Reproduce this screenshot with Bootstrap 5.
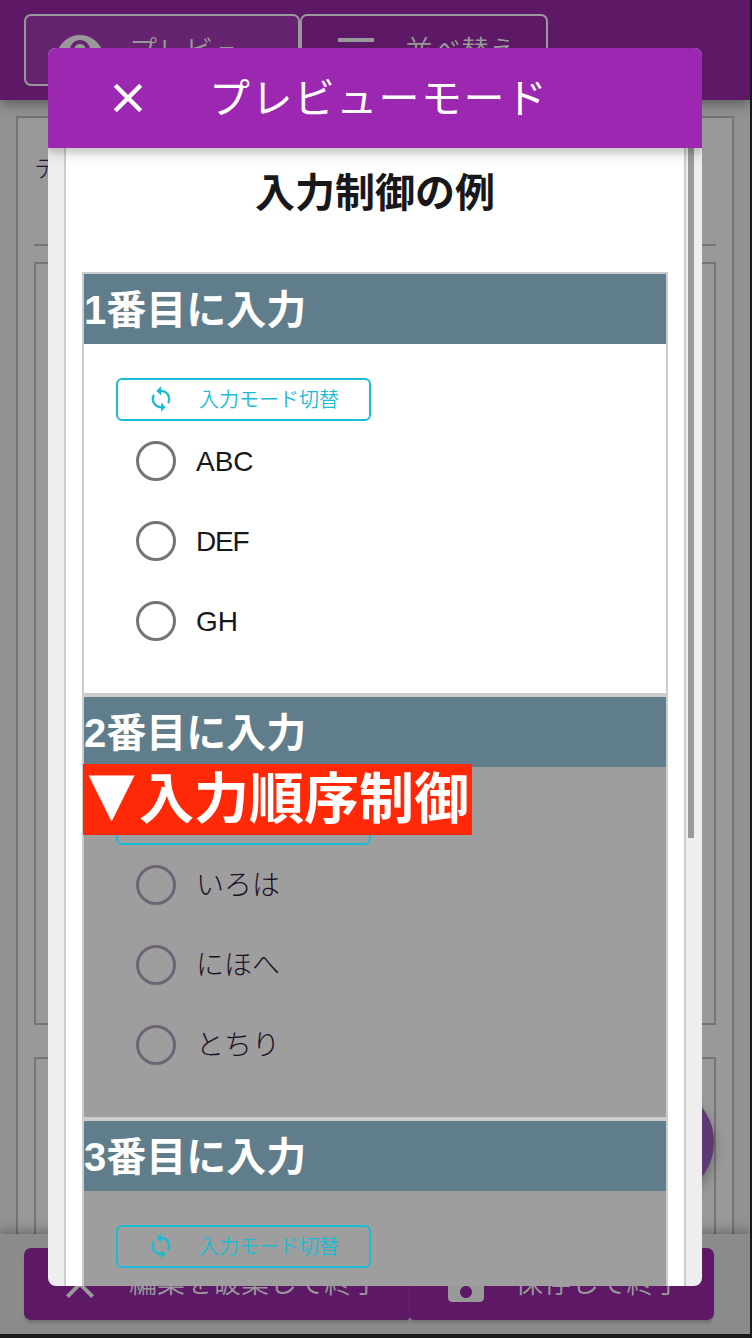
<!DOCTYPE html>
<html lang="ja">
<head>
<meta charset="utf-8">
<meta name="viewport" content="width=device-width, initial-scale=1">
<title>プレビューモード</title>
<link href="https://cdn.jsdelivr.net/npm/bootstrap@5.3.0/dist/css/bootstrap.min.css" rel="stylesheet">
<style>
*{box-sizing:border-box}
body{margin:0;width:752px;height:1338px;overflow:hidden;background:#1a1a1c;color:#18181b;font-family:"Liberation Sans","Noto Sans CJK JP",sans-serif;font-size:28px;line-height:1;font-weight:350}
svg{display:block;flex:none;fill:currentColor}
.screen{width:750px;height:1334px;background:#929292}
.topbar{height:100px;padding:14px 24px;background:#5d1866;color:#999;box-shadow:0 4px 8px -2px rgba(0,0,0,.2),0 8px 10px rgba(0,0,0,.12),0 2px 18px rgba(0,0,0,.1);z-index:1}
.tab-btn{height:72px;border:2px solid #999;border-radius:7px;padding-left:30px;white-space:nowrap}
.tab-btn span{padding-top:3px}
.tab-btn.on{width:276px;background:#652370}
.tab-btn.sort{width:248px}
.icon-gap{gap:25px}
.sheet{margin:16px 16px 0;border:2px solid #757575;border-bottom:0;background:#999;padding:0 16px}
.field{height:128px;border-bottom:2px solid #757575;padding:39px 0 0 0;font-size:24px;font-weight:300;color:#2a0f33}
.block{border:2px solid #757575;height:763px;margin-top:16px}
.block.next{margin-top:32px;height:177px;border-bottom:0}
.bottombar{height:100px;background:#8b8b8b;padding:14px 36px 14px 24px;box-shadow:0 -3px 8px rgba(0,0,0,.2),0 -8px 14px rgba(0,0,0,.08);color:#999;z-index:1}
.act{height:72px;background:#5d1866;border-radius:4px 4px 4px 7px;box-shadow:0 4px 3px -1px #737373;padding-left:32px;white-space:nowrap}
.act.quit{width:386px;border-radius:7px 0 4px 7px}
.act.keep{width:304px;border-radius:0 7px 7px 4px}
.fab{right:36px;top:1086px;width:112px;height:112px;border-radius:50%;background:#5e3973;box-shadow:0 6px 12px rgba(0,0,0,.3)}
.dialog-layer{z-index:5;padding:48px}
.sheet-modal{width:654px;height:1238px;border-radius:8px;background:#eee}
.modal-bar{height:100px;background:#9c27b0;color:#fff;padding-left:56px;font-size:41px;letter-spacing:1.4px;font-weight:400;z-index:2;box-shadow:0 5px 5px rgba(0,0,0,.13),0 10px 10px rgba(0,0,0,.08)}
.modal-bar svg{stroke:currentColor;stroke-width:.25}
.modal-bar .ttl{margin-left:57px;padding-top:2px}
.modal-main{height:1138px}
.form-sheet{width:622px;margin-left:16px;border:2px solid #ccc;border-width:0 2px;background:#fff;padding:0 16px}
.thumb{width:6px;height:690px;background:#999;margin-left:2px}
.form-ttl{height:124px;padding-top:25px;font-size:40px;font-weight:700}
.sec{border:2px solid #ccc;color:#18181b}
.sec .hd{height:70px;background:#607d8b;color:#fff;font-size:40px;font-weight:700;padding-top:2px}
.sec .bd{height:350px;padding:34px 32px 0}
.sec:first-of-type .bd{height:349px}
.sec.off .bd{background:#9e9e9e}
.sec.locked .bd{padding-top:35px}
.sec.off .pick{color:#201027;font-weight:300}
.toggle{width:255px;height:43px;border:2px solid #1abcd4;border-radius:6px;color:#1abcd4;font-size:20px;padding-left:30px;gap:24px}
.toggle svg{margin:-1px 0 0 -1px}
.pick{height:80px;padding-left:20px;gap:20px}
.pick span{padding-top:1px}
.sec.off .pick span{padding-top:2px}
.pick .tight{letter-spacing:-1.2px}
.pick .form-check-input{width:40px;height:40px;border:3px solid #757575;background:transparent;margin:0;float:none}
.sec.off .form-check-input{border-color:#6e6574}
.flag{left:-1px;top:67px;width:389px;height:71px;background:#ff2807;color:#fff;font-size:55px;font-weight:700;z-index:1;padding-left:1px}
.flag .tri{width:55px;font-family:"DejaVu Sans";font-size:60px;font-weight:400;margin-top:-14px}
</style>
<script src="https://cdn.jsdelivr.net/npm/bootstrap@5.3.0/dist/js/bootstrap.bundle.min.js"></script>
</head>
<body>
<svg width="0" height="0" class="position-absolute">
<symbol id="i-close" viewBox="0 0 24 24"><path d="M19 6.41 17.59 5 12 10.59 6.41 5 5 6.41 10.59 12 5 17.59 6.41 19 12 13.41 17.59 19 19 17.59 13.41 12z"/></symbol>
<symbol id="i-eye" viewBox="0 0 24 24"><path d="M12 4.5C7 4.5 2.73 7.61 1 12c1.73 4.39 6 7.5 11 7.5s9.27-3.11 11-7.5c-1.73-4.39-6-7.5-11-7.5zM12 17c-2.76 0-5-2.24-5-5s2.24-5 5-5 5 2.24 5 5-2.24 5-5 5zm0-8c-1.66 0-3 1.34-3 3s1.34 3 3 3 3-1.34 3-3-1.34-3-3-3z"/></symbol>
<symbol id="i-menu" viewBox="0 0 24 24"><path d="M3 18h18v-2H3v2zm0-5h18v-2H3v2zm0-7v2h18V6H3z"/></symbol>
<symbol id="i-save" viewBox="0 0 24 24"><path d="M17 3H5c-1.11 0-2 .9-2 2v14c0 1.1.89 2 2 2h14c1.1 0 2-.9 2-2V7l-4-4zm-5 16c-1.66 0-3-1.34-3-3s1.34-3 3-3 3 1.34 3 3-1.34 3-3 3zm3-10H5V5h10v4z"/></symbol>
<symbol id="i-sync" viewBox="0 0 24 24"><path d="M12 4V1L8 5l4 4V6c3.31 0 6 2.69 6 6 0 1.01-.25 1.97-.7 2.8l1.46 1.46C19.54 15.03 20 13.57 20 12c0-4.42-3.58-8-8-8zm0 14c-3.31 0-6-2.69-6-6 0-1.01.25-1.97.7-2.8L5.24 7.74C4.46 8.97 4 10.43 4 12c0 4.42 3.58 8 8 8v3l4-4-4-4v3z"/></symbol>
</svg>

<div class="screen position-relative overflow-hidden d-flex flex-column">
  <header class="topbar d-flex position-relative">
    <div class="tab-btn on d-flex align-items-center icon-gap"><svg width="48" height="48"><use href="#i-eye"/></svg><span>プレビュー</span></div>
    <div class="tab-btn sort d-flex align-items-center icon-gap"><svg width="48" height="48"><use href="#i-menu"/></svg><span>並べ替え</span></div>
  </header>
  <main class="sheet flex-grow-1 overflow-hidden">
    <div class="field">テスト</div>
    <div class="block"></div>
    <div class="block next"></div>
  </main>
  <div class="fab position-absolute"></div>
  <footer class="bottombar d-flex position-relative">
    <div class="act quit d-flex align-items-center icon-gap"><svg width="48" height="48"><use href="#i-close"/></svg><span>編集を破棄して終了</span></div>
    <div class="act keep d-flex align-items-center icon-gap"><svg width="48" height="48"><use href="#i-save"/></svg><span>保存して終了</span></div>
  </footer>

  <div class="dialog-layer position-absolute top-0 start-0">
    <div class="sheet-modal overflow-hidden">
      <div class="modal-bar d-flex align-items-center position-relative"><svg width="48" height="48"><use href="#i-close"/></svg><span class="ttl">プレビューモード</span></div>
      <div class="modal-main d-flex overflow-hidden">
        <div class="form-sheet">
          <div class="form-ttl text-center">入力制御の例</div>
          <section class="sec">
            <div class="hd d-flex align-items-center">1番目に入力</div>
            <div class="bd">
              <div class="toggle d-flex align-items-center"><svg width="28" height="28"><use href="#i-sync"/></svg><span>入力モード切替</span></div>
              <label class="pick d-flex align-items-center"><input class="form-check-input" type="radio" name="a"><span>ABC</span></label>
              <label class="pick d-flex align-items-center"><input class="form-check-input" type="radio" name="a"><span class="tight">DEF</span></label>
              <label class="pick d-flex align-items-center"><input class="form-check-input" type="radio" name="a"><span>GH</span></label>
            </div>
          </section>
          <section class="sec off locked position-relative">
            <div class="hd d-flex align-items-center">2番目に入力</div>
            <div class="flag position-absolute d-flex align-items-center text-nowrap"><span class="tri text-center">▼</span><span>入力順序制御</span></div>
            <div class="bd">
              <div class="toggle"></div>
              <label class="pick d-flex align-items-center"><input class="form-check-input" type="radio" name="b"><span>いろは</span></label>
              <label class="pick d-flex align-items-center"><input class="form-check-input" type="radio" name="b"><span>にほへ</span></label>
              <label class="pick d-flex align-items-center"><input class="form-check-input" type="radio" name="b"><span>とちり</span></label>
            </div>
          </section>
          <section class="sec off">
            <div class="hd d-flex align-items-center">3番目に入力</div>
            <div class="bd">
              <div class="toggle d-flex align-items-center"><svg width="28" height="28"><use href="#i-sync"/></svg><span>入力モード切替</span></div>
            </div>
          </section>
        </div>
        <div class="thumb"></div>
      </div>
    </div>
  </div>
</div>
</body>
</html>
